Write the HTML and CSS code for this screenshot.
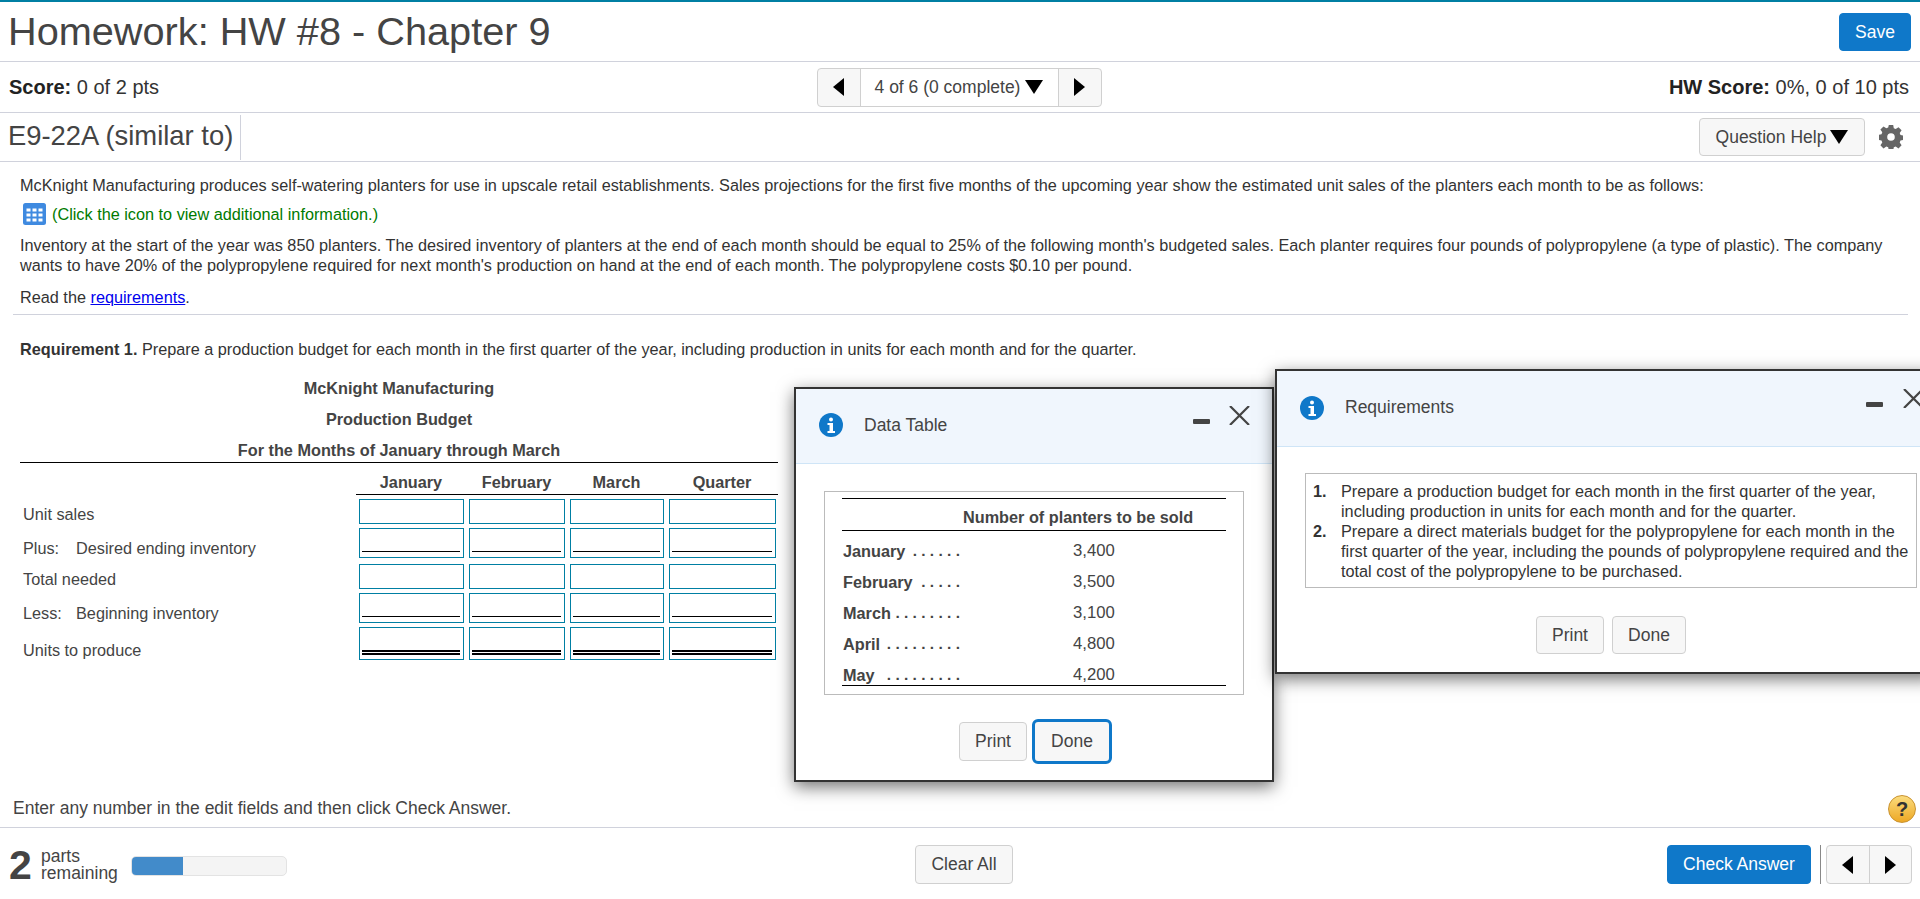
FILE: index.html
```html
<!DOCTYPE html>
<html lang="en">
<head>
    <meta charset="UTF-8">
    <title>Homework: HW #8 - Chapter 9</title>
    <link rel="stylesheet" href="styles.css">
</head>
<body>
    <div class="page">
        <div class="title-row">
            <h1>Homework: HW #8 - Chapter 9</h1>
            <button class="btn btn-primary btn-save">Save</button>
        </div>

        <div class="score-row">
            <div class="score"><b>Score:</b> 0 of 2 pts</div>
            <div class="pager">
                <span class="pager-arrow"><i class="tri tri-left"></i></span>
                <span class="pager-mid">4 of 6 (0 complete)<i class="tri tri-down"></i></span>
                <span class="pager-arrow"><i class="tri tri-right"></i></span>
            </div>
            <div class="score"><b>HW Score:</b> 0%, 0 of 10 pts</div>
        </div>

        <div class="question-row">
            <div class="question-name">E9-22A (similar to)</div>
            <div class="question-tools">
                <button class="btn btn-help">Question Help<i class="tri tri-down"></i></button>
                <svg class="gear" viewBox="0 0 24 24" width="24" height="24">
                    <path fill="#666" fill-rule="evenodd" d="M9.800 0h4.400l.6 3.300 1.900.8 2.800-1.900 3.100 3.100-1.900 2.800.8 1.900 3 .6v4.400l-3 .6-.8 1.900 1.900 2.800-3.100 3.100-2.800-1.900-1.900.8-.6 3.200H9.800l-.6-3.200-1.900-.8-2.800 1.900-3.100-3.100 1.900-2.800-.8-1.900-3-.6V9.800l3-.6.8-1.900-1.900-2.800 3.100-3.100 2.800 1.900 1.900-.8zM12 8.200a3.800 3.800 0 1 0 0 7.600 3.800 3.800 0 0 0 0-7.600z"/>
                </svg>
            </div>
        </div>

        <div class="content">
            <p>McKnight Manufacturing produces self-watering planters for use in upscale retail establishments. Sales projections for the first five months of the upcoming year show the estimated unit sales of the planters each month to be as follows:</p>
            <p class="click-info">
                <svg class="grid-icon" viewBox="0 0 23 22" width="23" height="22">
                    <rect width="23" height="22" rx="2.500" fill="#3f8ae0"/>
                    <path fill="#fff" d="M3.500 5.500h4v3h-4zM9.500 5.500h4v3h-4zM15.500 5.500h4v3h-4zM3.500 10.500h4v3h-4zM9.500 10.500h4v3h-4zM15.500 10.500h4v3h-4zM3.500 15.500h4v3h-4zM9.500 15.500h4v3h-4zM15.500 15.500h4v3h-4z"/>
                </svg>
                (Click the icon to view additional information.)
            </p>
            <p class="inventory">Inventory at the start of the year was 850 planters. The desired inventory of planters at the end of each month should be equal to 25% of the following month's budgeted sales. Each planter requires four pounds of polypropylene (a type of plastic). The company wants to have 20% of the polypropylene required for next month's production on hand at the end of each month. The polypropylene costs $0.10 per pound.</p>
            <p class="read">Read the <a href="#">requirements</a>.</p>
            <hr class="divider">
            <p class="requirement"><b>Requirement 1.</b> Prepare a production budget for each month in the first quarter of the year, including production in units for each month and for the quarter.</p>

            <div class="budget">
                <div class="budget-title">McKnight Manufacturing</div>
                <div class="budget-title">Production Budget</div>
                <div class="budget-title budget-title-last">For the Months of January through March</div>
                <div class="budget-grid">
                    <div class="budget-head budget-head-empty"></div>
                    <div class="budget-head">January</div>
                    <div class="budget-head">February</div>
                    <div class="budget-head">March</div>
                    <div class="budget-head">Quarter</div>

                    <div class="budget-label">Unit sales</div>
                    <div class="cell"></div><div class="cell"></div><div class="cell"></div><div class="cell"></div>

                    <div class="budget-label label-sub"><span class="label-prefix">Plus:</span>Desired ending inventory</div>
                    <div class="cell cell-single"></div><div class="cell cell-single"></div><div class="cell cell-single"></div><div class="cell cell-single"></div>

                    <div class="budget-label label-total">Total needed</div>
                    <div class="cell cell-total"></div><div class="cell cell-total"></div><div class="cell cell-total"></div><div class="cell cell-total"></div>

                    <div class="budget-label label-sub"><span class="label-prefix">Less:</span>Beginning inventory</div>
                    <div class="cell cell-single"></div><div class="cell cell-single"></div><div class="cell cell-single"></div><div class="cell cell-single"></div>

                    <div class="budget-label label-final">Units to produce</div>
                    <div class="cell cell-double"></div><div class="cell cell-double"></div><div class="cell cell-double"></div><div class="cell cell-double"></div>
                </div>
            </div>
        </div>

        <div class="hint-row">
            <span>Enter any number in the edit fields and then click Check Answer.</span>
            <span class="help-icon">?</span>
        </div>

        <div class="footer">
            <div class="parts">
                <span class="parts-num">2</span>
                <span class="parts-text">parts<br>remaining</span>
                <span class="progress"><span class="progress-fill"></span></span>
            </div>
            <button class="btn btn-clear">Clear All</button>
            <div class="footer-right">
                <button class="btn btn-primary btn-check">Check Answer</button>
                <span class="footer-sep"></span>
                <div class="pager pager-small">
                    <span class="pager-arrow"><i class="tri tri-left"></i></span>
                    <span class="pager-arrow"><i class="tri tri-right"></i></span>
                </div>
            </div>
        </div>
    </div>

    <!-- popup windows -->
    <div class="modal modal-data">
        <div class="modal-head">
            <svg class="info-icon" viewBox="0 0 24 24" width="24" height="24">
                <circle cx="12" cy="12" r="12" fill="#0f78c9"/>
                <circle cx="12" cy="6.500" r="2" fill="#fff"/>
                <path fill="#fff" d="M8.500 10h5.500v8h2v2H8.500v-2h2v-6h-2z"/>
            </svg>
            <span class="modal-title">Data Table</span>
            <span class="modal-min"></span>
            <span class="modal-close">
                <svg viewBox="0 0 21 19" width="21" height="19"><path d="M1 0l19 19M20 0L1 19" stroke="#444" stroke-width="2.200" fill="none"/></svg>
            </span>
        </div>
        <div class="modal-body">
            <div class="data-box">
                <table class="data-table">
                    <tr><th></th><th class="data-col">Number of planters to be sold</th></tr>
                    <tr><td class="data-month"><div class="month-line"><span>January</span><span class="dots">. . . . . .</span></div></td><td class="data-val">3,400</td></tr>
                    <tr><td class="data-month"><div class="month-line"><span>February</span><span class="dots">. . . . .</span></div></td><td class="data-val">3,500</td></tr>
                    <tr><td class="data-month"><div class="month-line"><span>March</span><span class="dots">. . . . . . . .</span></div></td><td class="data-val">3,100</td></tr>
                    <tr><td class="data-month"><div class="month-line"><span>April</span><span class="dots">. . . . . . . . .</span></div></td><td class="data-val">4,800</td></tr>
                    <tr><td class="data-month"><div class="month-line"><span>May</span><span class="dots">. . . . . . . . .</span></div></td><td class="data-val">4,200</td></tr>
                </table>
            </div>
            <div class="modal-buttons">
                <button class="btn btn-print">Print</button>
                <button class="btn btn-done btn-focus">Done</button>
            </div>
        </div>
    </div>

    <div class="modal modal-req">
        <div class="modal-head">
            <svg class="info-icon" viewBox="0 0 24 24" width="24" height="24">
                <circle cx="12" cy="12" r="12" fill="#0f78c9"/>
                <circle cx="12" cy="6.500" r="2" fill="#fff"/>
                <path fill="#fff" d="M8.500 10h5.500v8h2v2H8.500v-2h2v-6h-2z"/>
            </svg>
            <span class="modal-title">Requirements</span>
            <span class="modal-min"></span>
            <span class="modal-close">
                <svg viewBox="0 0 21 19" width="21" height="19"><path d="M1 0l19 19M20 0L1 19" stroke="#444" stroke-width="2.200" fill="none"/></svg>
            </span>
        </div>
        <div class="modal-body">
            <div class="req-box">
                <div class="req-item"><b>1.</b><span>Prepare a production budget for each month in the first quarter of the year, including production in units for each month and for the quarter.</span></div>
                <div class="req-item"><b>2.</b><span>Prepare a direct materials budget for the polypropylene for each month in the first quarter of the year, including the pounds of polypropylene required and the total cost of the polypropylene to be purchased.</span></div>
            </div>
            <div class="modal-buttons">
                <button class="btn btn-print">Print</button>
                <button class="btn btn-done">Done</button>
            </div>
        </div>
    </div>
</body>
</html>
```

FILE: styles.css
```css
* { box-sizing: border-box; }
body {
    margin: 0;
    height: 899px;
    overflow: hidden;
    background: #fff;
    font-family: "Liberation Sans", Arial, sans-serif;
    font-size: 16.25px;
    color: #444;
}
p { margin: 0; }

.page { width: 1920px; height: 899px; border-top: 2px solid #007fa3; }

.title-row {
    height: 60px;
    display: flex;
    align-items: center;
    justify-content: space-between;
    padding: 0 9px 0 8px;
    border-bottom: 1px solid #d0d2dc;
}
h1 { margin: 0; font-size: 39.7px; font-weight: normal; color: #444; }

.btn {
    font-family: inherit;
    font-size: 17.5px;
    color: #444;
    background: #f7f7f7;
    border: 1px solid #d0d0d0;
    border-radius: 4px;
    padding: 0;
    cursor: pointer;
}
.btn-primary { background: #0f78c9; border-color: #0f78c9; color: #fff; }
.btn-save { width: 72px; height: 38px; margin-top: 1px; }

.score-row {
    height: 51px;
    display: flex;
    align-items: center;
    justify-content: space-between;
    padding: 0 11px 0 9px;
    border-bottom: 1px solid #d0d2dc;
}
.score { font-size: 20px; color: #333; width: 280px; }
.score:last-child { text-align: right; }
.score b { color: #222; }

.pager {
    display: flex;
    height: 39px;
    border: 1px solid #d0d0d0;
    border-radius: 4px;
    background: #f7f7f7;
}
.pager-arrow { width: 42px; display: flex; align-items: center; justify-content: center; }
.pager-mid {
    width: 199px;
    display: flex;
    align-items: center;
    justify-content: center;
    font-size: 17.5px;
    background: #fff;
    border-left: 1px solid #d0d0d0;
    border-right: 1px solid #d0d0d0;
}

.tri { display: inline-block; width: 0; height: 0; }
.tri-left { border-top: 9px solid transparent; border-bottom: 9px solid transparent; border-right: 11px solid #000; }
.tri-right { border-top: 9px solid transparent; border-bottom: 9px solid transparent; border-left: 11px solid #000; }
.tri-down { border-left: 9px solid transparent; border-right: 9px solid transparent; border-top: 14px solid #000; margin-left: 5px; }

.question-row {
    height: 49px;
    display: flex;
    align-items: center;
    justify-content: space-between;
    padding: 0 17px 0 8px;
    border-bottom: 1px solid #d0d2dc;
}
.question-name {
    font-size: 27.4px;
    height: 45px;
    line-height: 42px;
    padding-right: 7px;
    border-right: 1px solid #d0d2dc;
}
.question-tools { display: flex; align-items: center; gap: 14px; }
.btn-help {
    width: 166px;
    height: 38px;
    display: flex;
    align-items: center;
    justify-content: center;
}
.btn-help .tri-down { margin-left: 4px; }

.content { height: 628px; padding: 13px 12px 0 20px; line-height: 20px; color: #333; }
.click-info { display: flex; align-items: center; gap: 6px; color: #007a00; margin: 7px 0 0 3px; height: 24px; }
.inventory { margin-top: 9px; }
.read { margin-top: 12px; }
.read a { color: #00e; }
.divider { border: 0; border-top: 1px solid #d0d2dc; margin: 7px 0 0 -7px; }
.requirement { margin-top: 24px; }

.budget { width: 758px; margin-top: 14px; color: #444; }
.budget-title { text-align: center; font-weight: bold; height: 31px; line-height: 31px; }
.budget-title-last { height: 28px; line-height: 30px; border-bottom: 1px solid #000; }

.budget-grid {
    display: grid;
    grid-template-columns: 336px 110px 101px 99px 112px;
    grid-template-rows: 32px 29px 34px 31px 34px 37px;
}
.budget-head {
    font-weight: bold;
    text-align: center;
    line-height: 38px;
    border-bottom: 1px solid #000;
}
.budget-head-empty { border-bottom: 0; }
.budget-label { padding: 9px 0 0 3px; line-height: 20px; }
.label-sub { padding-top: 14px; }
.label-total { padding-top: 11px; }
.label-final { padding-top: 17px; }
.label-prefix { display: inline-block; width: 53px; }

.cell {
    margin: 4px 2px 0 3px;
    border: 1px solid #007fa3;
    background: #fff;
    position: relative;
}
.cell-total { margin-top: 6px; }
.cell-single::after {
    content: "";
    position: absolute;
    left: 2px;
    right: 3px;
    bottom: 5px;
    border-top: 1px solid #000;
}
.cell-double::after {
    content: "";
    position: absolute;
    left: 2px;
    right: 3px;
    bottom: 4px;
    height: 1px;
    border-top: 2px solid #000;
    border-bottom: 2px solid #000;
}

.hint-row {
    height: 38px;
    display: flex;
    align-items: center;
    justify-content: space-between;
    padding: 0 4px 0 13px;
    font-size: 17.5px;
    color: #444;
    border-bottom: 1px solid #d0d2dc;
}
.help-icon {
    width: 28px;
    height: 28px;
    border-radius: 50%;
    background: linear-gradient(#fbdc7e, #eda825);
    border: 1px solid #c9922f;
    color: #333;
    font-weight: bold;
    font-size: 20px;
    line-height: 26px;
    text-align: center;
}

.footer {
    height: 71px;
    display: grid;
    grid-template-columns: 1fr auto 1fr;
    align-items: center;
    padding: 2px 8px 0 9px;
}
.parts { display: flex; align-items: center; }
.parts-num { font-size: 41px; font-weight: bold; line-height: 40px; width: 32px; }
.parts-text { font-size: 17.5px; line-height: 17px; width: 90px; }
.progress {
    width: 156px;
    height: 20px;
    background: #f4f4f4;
    border: 1px solid #e3e3e3;
    border-radius: 5px;
    overflow: hidden;
    margin-top: 3px;
}
.progress-fill { display: block; width: 33.3%; height: 100%; background: #428bca; }
.btn-clear { width: 98px; height: 39px; margin-left: 7px; }
.footer-right { display: flex; align-items: center; justify-content: flex-end; }
.btn-check { width: 144px; height: 39px; }
.footer-sep { width: 1px; height: 39px; background: #888; margin: 0 5px 0 9px; }
.pager-small { height: 39px; width: 86px; }
.pager-small .pager-arrow { flex: 1; }
.pager-small .pager-arrow + .pager-arrow { border-left: 1px solid #d0d0d0; }

.modal {
    position: absolute;
    background: #fff;
    border: 2px solid #333;
    box-shadow: 0 5px 16px rgba(0, 0, 0, 0.55);
}
.modal-data { left: 794px; top: 387px; width: 480px; height: 395px; }
.modal-req { left: 1275px; top: 369px; width: 660px; height: 305px; }
.modal-head {
    position: relative;
    display: flex;
    align-items: center;
    background: #f0f6fd;
    border-bottom: 1px solid #cfe5f7;
    padding: 0 0 2px 23px;
    font-size: 17.5px;
    color: #444;
}
.modal-data .modal-head { height: 75px; }
.modal-req .modal-head { height: 76px; }
.modal-title { margin-left: 21px; }
.modal-min {
    position: absolute;
    width: 17px;
    height: 5px;
    border-radius: 1px;
    background: #444;
}
.modal-close { position: absolute; line-height: 0; }
.modal-data .modal-min { left: 397px; top: 30px; }
.modal-data .modal-close { left: 433px; top: 17px; }
.modal-req .modal-min { left: 589px; top: 31px; }
.modal-req .modal-close { left: 626px; top: 18px; }

.data-box {
    margin: 27px 0 0 28px;
    width: 420px;
    height: 204px;
    border: 1px solid #bbb;
    padding: 6px 17px 0;
}
.data-table { width: 384px; border-collapse: collapse; border-top: 1px solid #000; border-bottom: 1px solid #000; }
.data-table th { height: 32px; padding: 6px 0 0; border-bottom: 1px solid #000; text-align: left; }
.data-table th.data-col { padding-left: 3px; }
.data-table td { height: 31px; padding: 5px 0 0; line-height: 20px; vertical-align: top; }
.data-table tr:nth-child(2) td { height: 36px; padding-top: 10px; }
.data-table tr:last-child td { height: 26px; }
.data-month { width: 118px; font-weight: bold; }
.month-line { display: flex; justify-content: space-between; padding-left: 1px; }
.dots { font-size: 15.5px; }
.data-table td.data-val { padding-left: 113px; font-size: 16.7px; }

.modal-buttons { display: flex; align-items: center; }
.modal-data .modal-buttons { justify-content: center; gap: 5px; margin-top: 24px; padding-left: 3px; }
.modal-req .modal-buttons { gap: 8px; margin: 28px 0 0 259px; }
.modal-req .btn { height: 38px; }
.btn-print { width: 68px; height: 39px; }
.btn-done { width: 74px; height: 39px; }
.btn-focus { width: 80px; height: 45px; border: 3px solid #0f78c9; border-radius: 6px; }

.req-box {
    margin: 26px 0 0 28px;
    width: 612px;
    height: 115px;
    border: 1px solid #bbb;
    padding: 7px;
    line-height: 20px;
    color: #333;
}
.req-item { display: flex; }
.req-item b { width: 28px; flex: none; }
```
